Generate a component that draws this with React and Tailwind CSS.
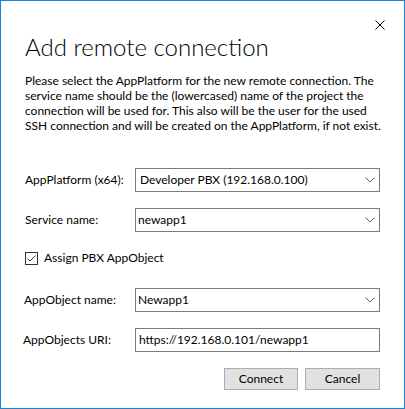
import React from "react";

const font = { fontFamily: 'Lato, "Noto Sans", sans-serif' };

function Chevron() {
  return (
    <svg width="10" height="6" viewBox="0 0 10 6" className="shrink-0">
      <path d="M0.5 0.5 L5 5 L9.5 0.5" fill="none" stroke="#606060" strokeWidth="1" />
    </svg>
  );
}

function Combo({ value, pl }) {
  return (
    <div className={`flex h-[24px] w-[245px] items-center border border-[#7a7a7a] bg-white pr-[4px] ${pl}`}>
      <span className="flex-1 text-[12px] text-black">{value}</span>
      <Chevron />
    </div>
  );
}

export default function App() {
  return (
    <div
      className="relative box-border flex h-[409px] w-[405px] flex-col border border-[#1883d7] bg-white text-black"
      style={font}
    >
      <div className="flex justify-end pr-[19px] pt-[19px]">
        <svg width="10" height="10" viewBox="0 0 10 10">
          <path d="M0.5 0.5 L9.5 9.5 M9.5 0.5 L0.5 9.5" stroke="#000" strokeWidth="1" />
        </svg>
      </div>
      <div className="px-[24px]">
        <h1 className="mt-[1px] text-[24px] font-light leading-[32px]">Add remote connection</h1>
        <p className="mt-[10px] whitespace-nowrap text-[12px] leading-[15px]">
          Please select the AppPlatform for the new remote connection. The<br />
          service name should be the (lowercased) name of the project the<br />
          connection will be used for. This also will be the user for the used<br />
          SSH connection and will be created on the AppPlatform, if not exist.
        </p>
        <div className="mt-[35px] flex items-center">
          <span className="w-[110px] text-[12px]">AppPlatform (x64):</span>
          <Combo value="Developer PBX (192.168.0.100)" pl="pl-[4px]" />
        </div>
        <div className="mt-[16px] flex items-center">
          <span className="w-[110px] text-[12px]">Service name:</span>
          <Combo value="newapp1" pl="pl-[2px]" />
        </div>
        <div className="mt-[17px] flex items-center gap-[6px]">
          <div className="flex h-[13px] w-[13px] items-center justify-center border border-[#333]">
            <svg width="11" height="11" viewBox="0 0 11 11">
              <path d="M1.5 5.5 L4 8 L9.5 2.5" fill="none" stroke="#333" strokeWidth="1" />
            </svg>
          </div>
          <span className="text-[12px]">Assign PBX AppObject</span>
        </div>
        <div className="mt-[21px] flex items-center">
          <span className="-ml-[1px] w-[111px] text-[12px]">AppObject name:</span>
          <Combo value="Newapp1" pl="pl-[2px]" />
        </div>
        <div className="mt-[16px] flex items-center">
          <span className="-ml-[2px] w-[112px] text-[12px]">AppObjects URI:</span>
          <div className="flex h-[24px] w-[245px] items-center border border-[#7a7a7a] bg-white pl-[3px]">
            <span className="text-[12px]">https://192.168.0.101/newapp1</span>
          </div>
        </div>
        <div className="mt-[16px] flex justify-end gap-[7px]">
          <button className="h-[22px] w-[74px] border border-[#adadad] bg-[#e1e1e1] text-[12px]">Connect</button>
          <button className="h-[22px] w-[75px] border border-[#adadad] bg-[#e1e1e1] text-[12px]">Cancel</button>
        </div>
      </div>
    </div>
  );
}
